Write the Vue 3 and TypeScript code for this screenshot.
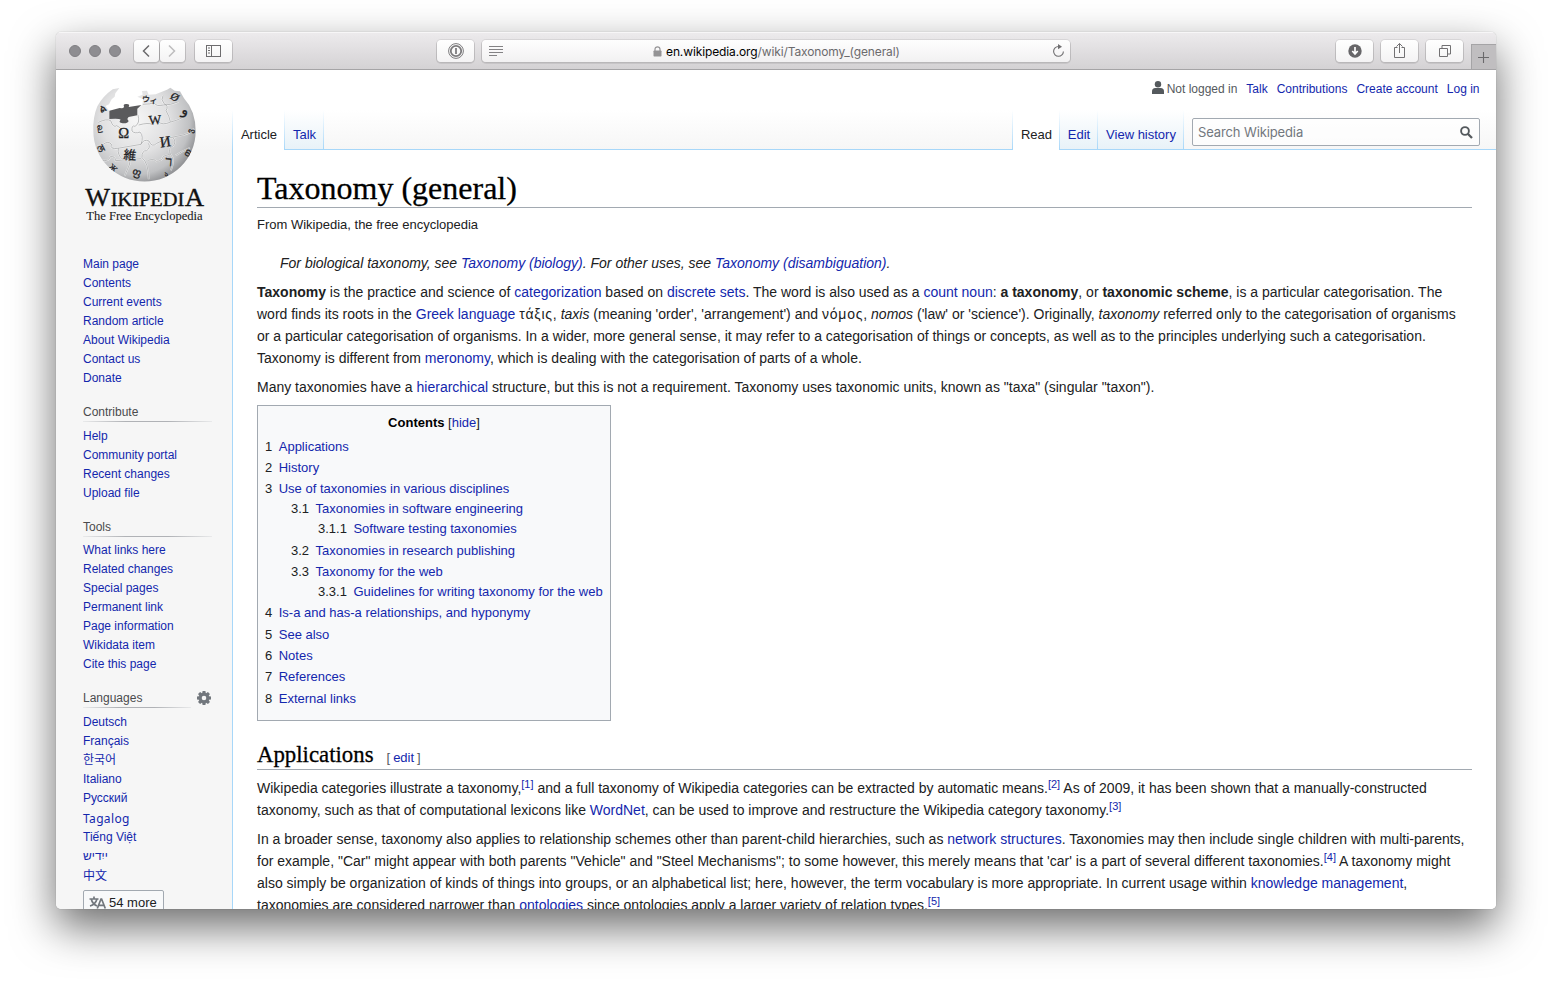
<script setup lang="ts">
interface Portal { title: string; items: string[] }
interface TocRow { num: string; label: string; level: number; after: number }

const mainLinks: string[] = ['Main page', 'Contents', 'Current events', 'Random article', 'About Wikipedia', 'Contact us', 'Donate']
const portals: Portal[] = [
  { title: 'Contribute', items: ['Help', 'Community portal', 'Recent changes', 'Upload file'] },
  { title: 'Tools', items: ['What links here', 'Related changes', 'Special pages', 'Permanent link', 'Page information', 'Wikidata item', 'Cite this page'] },
]
const languages: string[] = ['Deutsch', 'Français', '한국어', 'Italiano', 'Русский', 'Tagalog', 'Tiếng Việt', 'ייִדיש', '中文']
const personal: string[] = ['Talk', 'Contributions', 'Create account', 'Log in']
const seams: string = 'M85 142Q110 130 122 137 130 160 140 152 162 162 155 180M204 120Q211 145 195 154 184 149 186 168 194 177 210 171 222 184 213 208M206 150Q236 142 246 148 248 136 265 139 276 153 302 141 317 138 340 127M218 88Q242 88 252 83 259 96 280 90 300 91 326 80M279 62Q272 74 282 86 297 92 288 107 298 124 301 140M79 216 100 208Q113 197 124 207 119 224 143 220L213 208Q221 191 237 198 245 219 260 205L291 190 339 180Q358 177 372 161M145 220Q142 240 157 252 177 246 179 267L164 303M235 205Q243 218 230 227 215 226 216 248 236 264 236 313M309 188Q321 201 308 214 291 220 302 239 316 253 303 286M95 256Q116 260 121 245 135 242 137 257L213 251M234 256Q253 250 260 259 276 258 280 244L301 237M316 242Q338 227 360 218'
const toc: TocRow[] = [
  { num: '1', label: 'Applications', level: 1, after: 1 },
  { num: '2', label: 'History', level: 1, after: 1 },
  { num: '3', label: 'Use of taxonomies in various disciplines', level: 1, after: 0 },
  { num: '3.1', label: 'Taxonomies in software engineering', level: 2, after: 0 },
  { num: '3.1.1', label: 'Software testing taxonomies', level: 3, after: 2 },
  { num: '3.2', label: 'Taxonomies in research publishing', level: 2, after: 1 },
  { num: '3.3', label: 'Taxonomy for the web', level: 2, after: 0 },
  { num: '3.3.1', label: 'Guidelines for writing taxonomy for the web', level: 3, after: 1 },
  { num: '4', label: 'Is-a and has-a relationships, and hyponymy', level: 1, after: 2 },
  { num: '5', label: 'See also', level: 1, after: 1 },
  { num: '6', label: 'Notes', level: 1, after: 1 },
  { num: '7', label: 'References', level: 1, after: 2 },
  { num: '8', label: 'External links', level: 1, after: 0 },
]
</script>

<template>
  <div class="desktop">
    <div class="window">
      <div class="toolbar">
        <div class="lights"><i></i><i></i><i></i></div>
        <div class="nav-pair">
          <span class="btn half"><svg width="24" height="22" viewBox="0 0 24 22"><path d="M15 5.500 9.500 11l5.500 5.500" fill="none" stroke="#6b6a6c" stroke-width="1.500" /></svg></span>
          <span class="btn half"><svg width="24" height="22" viewBox="0 0 24 22"><path d="m9 5.500 5.500 5.500L9 16.500" fill="none" stroke="#bdbcbe" stroke-width="1.500" /></svg></span>
        </div>
        <span class="btn side"><svg width="37" height="22" viewBox="0 0 37 22"><g fill="none" stroke="#6d6c6e"><rect x="11.500" y="5.500" width="14" height="11" /><path d="M16.500 5.500v11M13 8h2M13 10.500h2M13 13h2" /></g></svg></span>
        <span class="btn onepass"><svg width="37" height="22" viewBox="0 0 37 22"><g fill="none" stroke="#7d7c7e"><circle cx="19" cy="11" r="7.400" /><circle cx="19" cy="11" r="5.200" stroke-width="1.800" /><path d="M19 8v6" stroke-width="1.800" /></g></svg></span>
        <div class="url">
          <svg class="reader" width="15" height="11" viewBox="0 0 15 11"><path d="M0 .5h14M0 3.500h14M0 6.500h14M0 9.500h8" stroke="#838284" /></svg>
          <svg class="lock" width="9" height="11" viewBox="0 0 9 11"><path d="M2 5V3.300a2.500 2.500 0 0 1 5 0V5" fill="none" stroke="#949395" stroke-width="1.200" /><rect x=".5" y="4.500" width="8" height="6" rx=".7" fill="#949395" /></svg>
          <span class="address">en.wikipedia.org<span class="path">/wiki/Taxonomy_(general)</span></span>
          <svg class="reload" width="13" height="14" viewBox="0 0 13 14"><path d="M6.500 2.500A4.900 4.900 0 1 0 11.400 7.500" fill="none" stroke="#6f6e70" stroke-width="1.100" /><path d="M6 0l4 2.700-4 2.600z" fill="#6f6e70" /></svg>
        </div>
        <span class="btn download"><svg width="37" height="22" viewBox="0 0 37 22"><circle cx="19" cy="11" r="6.700" fill="#676669" /><path d="M19 7v6.500M16.300 11l2.700 3 2.700-3" fill="none" stroke="#fff" stroke-width="1.700" /></svg></span>
        <span class="btn gap"><svg width="37" height="22" viewBox="0 0 37 22"><path d="M16.500 7.500h-3v10h10v-10h-3M18.500 13V3.500M15.500 6.500l3-3 3 3" fill="none" stroke="#727173" /></svg></span>
        <span class="btn gap"><svg width="37" height="22" viewBox="0 0 37 22"><path d="M13.500 8.500h8v8h-8zM16 8.500v-3h8.500v8.500h-3" fill="none" stroke="#727173" /></svg></span>
        <span class="newtab"><svg width="25" height="25" viewBox="0 0 25 25"><path d="M7 13.500h11M12.500 8v11" stroke="#6a696b" stroke-width="1.100" /></svg></span>
      </div>

      <div class="page">
        <aside class="sidebar">
          <svg class="logo" width="150" height="155" viewBox="0 0 450 465">
            <defs>
              <radialGradient id="ball" gradientUnits="userSpaceOnUse" cx="195" cy="135" r="205">
                <stop offset="0" stop-color="#f6f6f6" /><stop offset=".5" stop-color="#e0e0e1" /><stop offset=".8" stop-color="#c0c1c3" /><stop offset="1" stop-color="#828386" />
              </radialGradient>
              <clipPath id="globe-clip"><path d="M148 39 128 43Q98 64 82 94 68 128 70 169A153 150 0 0 0 377 169Q377 108 342 70L330 49 314 47 301 38 291 44 257 58 236 59 231 47 216 48 218 59 202 65 219 73 217 90 202 97 203 121 175 126 171 141 150 140 145 130 119 132 117 107 107 93 117 88 125 73 134 65 136 55z" /></clipPath>
            </defs>
            <path d="M148 39 128 43Q98 64 82 94 68 128 70 169A153 150 0 0 0 377 169Q377 108 342 70L330 49 314 47 301 38 291 44 257 58 236 59 231 47 216 48 218 59 202 65 219 73 217 90 202 97 203 121 175 126 171 141 150 140 145 130 119 132 117 107 107 93 117 88 125 73 134 65 136 55z" fill="url(#ball)" />
            <path d="M118 107 149 99Q161 101 162 95 158 86 170 87 181 87 176 96L214 90 202 101 202 121 176 126Q169 132 176 138 173 146 158 145 143 142 152 134 147 129 118 132z" fill="#5a5a5c" />
            <g clip-path="url(#globe-clip)">
              <path :d="seams" fill="none" stroke="#fff" stroke-opacity=".7" stroke-width="5" />
              <path :d="seams" fill="none" stroke="#a3a4a6" stroke-width="2.200" />
              <g class="glyphs" text-anchor="middle">
                <text x="161" y="189" font-size="44">Ω</text>
                <text x="256" y="148" font-size="40" transform="rotate(-4 256 148)">W</text>
                <text x="288" y="215" font-size="46" transform="rotate(-8 288 215)">И</text>
                <text x="179" y="254" font-size="38" class="cjk" transform="rotate(5 179 254)">維</text>
                <text x="295" y="273" font-size="42" transform="rotate(5 295 273)">ר</text>
                <text x="238" y="83" font-size="24" class="cjk" transform="rotate(8 238 83)">ウィ</text>
                <text x="312" y="76" font-size="33" transform="rotate(35 312 70)">Ø</text>
                <text x="343" y="119" font-size="42" transform="rotate(12 345 119)">و</text>
                <text x="103" y="109" font-size="32" transform="rotate(-25 103 107)">ል</text>
                <text x="91" y="170" font-size="28" transform="rotate(80 91 161)">வ</text>
                <text x="95" y="232" font-size="29" transform="rotate(62 95 222)">ਲ</text>
                <text x="199" y="302" font-size="32" transform="rotate(15 199 298)">ფ</text>
                <text x="354" y="242" font-size="28" transform="rotate(-62 354 234)">თ</text>
                <text x="362" y="175" font-size="24" transform="rotate(-80 362 168)">ვ</text>
                <text x="128" y="287" font-size="26" transform="rotate(43 128 280)">Җ</text>
                <text x="288" y="304" font-size="20" transform="rotate(-22 288 298)">ა</text>
              </g>
            </g>
            <g class="wordmark">
              <text x="46" y="392" font-size="73" textLength="74" lengthAdjust="spacingAndGlyphs">W</text>
              <text x="122" y="392" font-size="55" textLength="221" lengthAdjust="spacingAndGlyphs">IKIPEDI</text>
              <text x="344" y="392" font-size="73" textLength="58" lengthAdjust="spacingAndGlyphs">A</text>
              <text class="tagline" x="49" y="435" font-size="37" textLength="349" lengthAdjust="spacingAndGlyphs">The Free Encyclopedia</text>
            </g>
          </svg>
          <ul class="links first"><li v-for="item in mainLinks" :key="item"><a>{{ item }}</a></li></ul>
          <section v-for="portal in portals" :key="portal.title" class="portal" :class="portal.title.toLowerCase()">
            <h3>{{ portal.title }}</h3>
            <ul class="links"><li v-for="item in portal.items" :key="item"><a>{{ item }}</a></li></ul>
          </section>
          <section class="portal langs">
            <div class="lang-head">
              <h3>Languages</h3>
              <svg width="14" height="14" viewBox="0 0 20 20"><g fill="#72777d"><path d="M8 0h4l1 5H7zM8 20h4l1-5H7z" /><path d="M8 0h4l1 5H7zM8 20h4l1-5H7z" transform="rotate(45 10 10)" /><path d="M8 0h4l1 5H7zM8 20h4l1-5H7z" transform="rotate(90 10 10)" /><path d="M8 0h4l1 5H7zM8 20h4l1-5H7z" transform="rotate(135 10 10)" /></g><circle cx="10" cy="10" r="5.300" fill="none" stroke="#72777d" stroke-width="4" /></svg>
            </div>
            <ul class="links"><li v-for="item in languages" :key="item" :class="{ wide: item === 'Tagalog', han: item === '中文' }"><a>{{ item }}</a></li></ul>
            <div class="more">
              <svg width="17" height="14" viewBox="0 0 17 14"><g fill="none" stroke="#72777d" stroke-width="1.700"><path d="M.5 3h9M5 .5V3M2.300 3C3 6.500 5 8.500 8 10M8 3C7 6.500 4.500 9 1 10M8.300 12.500l3.700-9.500h.6l3.700 9.500M10 9.300h5" /></g></svg>
              <span>54 more</span>
            </div>
          </section>
        </aside>

        <div class="main">
          <header class="head">
            <div class="personal">
              <svg width="12" height="13" viewBox="0 0 12 13"><circle cx="6" cy="3.300" r="3.200" fill="#54595d" /><path d="M0 13v-2.500Q0 7 3.300 7h5.400Q12 7 12 10.500V13z" fill="#54595d" /></svg>
              <span class="anon">Not logged in</span>
              <a v-for="item in personal" :key="item">{{ item }}</a>
            </div>
            <nav class="tabs">
              <span class="tab article on">Article</span>
              <a class="tab talk">Talk</a>
              <span class="fill"></span>
              <span class="tab read on">Read</span>
              <a class="tab edit">Edit</a>
              <a class="tab history">View history</a>
              <div class="search">
                <span>Search Wikipedia</span>
                <svg width="13" height="13" viewBox="0 0 13 13"><circle cx="5" cy="5" r="3.900" fill="none" stroke="#54595d" stroke-width="1.900" /><path d="m7.800 7.800 4.200 4.200" stroke="#54595d" stroke-width="2.300" /></svg>
              </div>
            </nav>
          </header>

          <article class="content">
            <h1><span>Taxonomy (general)</span></h1>
            <div class="sub">From Wikipedia, the free encyclopedia</div>
            <div class="hatnote">For biological taxonomy, see <a>Taxonomy (biology)</a>. For other uses, see <a>Taxonomy (disambiguation)</a>.</div>
            <p>
              <b>Taxonomy</b> is the practice and science of <a>categorization</a> based on <a>discrete sets</a>. The word is also used as a <a>count noun</a>: <b>a taxonomy</b>, or <b>taxonomic scheme</b>, is a particular categorisation. The<br>
              word finds its roots in the <a>Greek language</a> <span class="greek">τάξις</span>, <i>taxis</i> (meaning 'order', 'arrangement') and <span class="greek">νόμος</span>, <i>nomos</i> ('law' or 'science'). Originally, <i>taxonomy</i> referred only to the categorisation of organisms<br>
              or a particular categorisation of organisms. In a wider, more general sense, it may refer to a categorisation of things or concepts, as well as to the principles underlying such a categorisation.<br>
              Taxonomy is different from <a>meronomy</a>, which is dealing with the categorisation of parts of a whole.
            </p>
            <p>Many taxonomies have a <a>hierarchical</a> structure, but this is not a requirement. Taxonomy uses taxonomic units, known as "taxa" (singular "taxon").</p>
            <div class="toc">
              <div class="toc-title"><b>Contents</b> [<a>hide</a>]</div>
              <div v-for="row in toc" :key="row.num" class="toc-row" :class="['level' + row.level, 'after' + row.after]"><span>{{ row.num }}</span><a>{{ row.label }}</a></div>
            </div>
            <h2><span>Applications</span><small>[ <a>edit</a> ]</small></h2>
            <p>
              Wikipedia categories illustrate a taxonomy,<sup>[1]</sup> and a full taxonomy of Wikipedia categories can be extracted by automatic means.<sup>[2]</sup> As of 2009, it has been shown that a manually-constructed<br>
              taxonomy, such as that of computational lexicons like <a>WordNet</a>, can be used to improve and restructure the Wikipedia category taxonomy.<sup>[3]</sup>
            </p>
            <p>
              In a broader sense, taxonomy also applies to relationship schemes other than parent-child hierarchies, such as <a>network structures</a>. Taxonomies may then include single children with multi-parents,<br>
              for example, "Car" might appear with both parents "Vehicle" and "Steel Mechanisms"; to some however, this merely means that 'car' is a part of several different taxonomies.<sup>[4]</sup> A taxonomy might<br>
              also simply be organization of kinds of things into groups, or an alphabetical list; here, however, the term vocabulary is more appropriate. In current usage within <a>knowledge management</a>,<br>
              taxonomies are considered narrower than <a>ontologies</a> since ontologies apply a larger variety of relation types.<sup>[5]</sup>
            </p>
          </article>
        </div>
      </div>
    </div>
  </div>
</template>

<style>
body { margin: 0; background: #fff; overflow: hidden; }
</style>

<style scoped>
.desktop { box-sizing: border-box; width: 1552px; height: 989px; padding: 32px 56px 80px; background: #fff; font-family: "Liberation Sans", "Noto Sans", "Noto Sans CJK KR", sans-serif; color: #202122; overflow: hidden; }
.window { display: flex; flex-direction: column; height: 877px; border-radius: 5px; overflow: hidden; box-shadow: 0 0 1px rgba(0,0,0,.4), 0 18px 44px rgba(0,0,0,.58); background: #fff; }
.toolbar { box-sizing: border-box; display: flex; flex: none; height: 38px; padding: 8px 0 0 13px; background: linear-gradient(#edebed, #d4d2d4); border-bottom: 1px solid #a5a4a6; box-shadow: inset 0 1px #f7f6f7; }
.lights { display: flex; gap: 8px; margin-top: 5px; }
.lights i { box-sizing: border-box; width: 12px; height: 12px; border-radius: 50%; background: #8e8d91; border: 1px solid #807f83; }
.btn { box-sizing: border-box; display: flex; width: 37px; height: 22px; border-radius: 4px; background: linear-gradient(#fff, #f4f3f4); box-shadow: 0 0 0 1px rgba(0,0,0,.07), 0 1px 0 1px rgba(0,0,0,.08); }
.nav-pair { display: flex; gap: 1px; margin-left: 13px; }
.half { width: 25px; }
.side { margin-left: 10px; }
.onepass { margin-left: 205px; }
.url { display: flex; width: 588px; height: 22px; margin-left: 8px; border-radius: 4px; background: linear-gradient(#fefefe, #f2f1f2); box-shadow: 0 0 0 1px rgba(0,0,0,.07), 0 1px 0 1px rgba(0,0,0,.08); align-items: center; }
.reader { margin-left: 7px; }
.lock { margin-left: 149px; }
.address { width: 386px; margin-left: 4px; padding-top: 1px; font: 12px/22px Inter, sans-serif; letter-spacing: -.12px; color: #000; white-space: nowrap; }
.path { color: #6b6a6c; }
.download { margin-left: 266px; }
.gap { margin-left: 8px; }
.newtab { box-sizing: border-box; width: 25px; height: 25px; margin: 4px 0 0 8px; background: #c0bec0; box-shadow: inset 1px 1px #a5a4a6; }
.page { display: flex; flex: 1; min-height: 0; background: linear-gradient(#fff, #fff 40px, #f6f6f6 80px, #f6f6f6); }
a, sup { color: #1327ad; }
.sidebar { width: 176px; flex: none; box-sizing: border-box; font-size: 12px; }
.logo { display: block; margin: 5px 0 0 14px; }
.glyphs { font-family: "Liberation Serif", "DejaVu Sans", "Noto Sans", serif; fill: #202022; stroke: #202022; stroke-width: .8; }
.glyphs .cjk { font-family: "Noto Sans CJK JP", sans-serif; }
.wordmark { font-family: "Liberation Serif", serif; fill: #111; stroke: #111; stroke-width: 1; }
.tagline { stroke-width: .3; fill: #222; }
.links { list-style: none; margin: 0; padding: 0 0 0 27px; line-height: 19px; }
.links li { height: 19px; white-space: nowrap; }
.links.first { margin-top: 25px; }
.portal { margin-top: 15px; }
h3 { margin: 0 0 5px 27px; width: 129px; height: 19px; box-sizing: border-box; font-size: 12px; line-height: 18px; font-weight: 400; color: #4a4b4d; background: linear-gradient(to right, rgba(180,184,189,.2), #b0b2b6 33%, #b0b2b6 66%, rgba(180,184,189,.2)) left bottom / 100% 1px no-repeat; }
.tools h3 { margin-bottom: 4px; }
.lang-head { display: flex; }
.lang-head h3 { width: 108px; }
.lang-head svg { margin: 2px 0 0 6px; }
.links .wide { height: 20px; padding-top: 0; line-height: 21px; font-family: "Noto Sans", sans-serif; letter-spacing: .35px; }
.links .han { line-height: 21px; }
.more { box-sizing: border-box; display: flex; width: 81px; height: 28px; margin: 5px 0 0 27px; padding: 5px 0 0 5px; gap: 3px; border: 1px solid #a2a9b1; border-radius: 2px; background: #f8f9fa; font-size: 13px; line-height: 13px; white-space: nowrap; }
.main { display: flex; flex-direction: column; flex: 1; min-width: 0; }
.head { display: flex; flex-direction: column; flex: none; height: 80px; }
.personal { display: flex; justify-content: flex-end; gap: 9px; height: 40px; padding-right: 16.5px; font-size: 12px; line-height: 38px; white-space: nowrap; }
.personal svg { margin: 11px -6px 0 0; }
.anon { color: #54595d; }
.tabs { display: flex; height: 40px; background: linear-gradient(#a7d7f9, #a7d7f9) left bottom / 100% 1px no-repeat, linear-gradient(#fff, #a7d7f9) left top / 1px 100% no-repeat; padding-left: 1px; }
.tab { box-sizing: border-box; height: 39px; font-size: 13px; line-height: 49px; text-align: center; white-space: nowrap; background: linear-gradient(#fff, #a7d7f9) right top / 1px 100% no-repeat, linear-gradient(#fff, #e8f2f8); }
.tab.on { height: 40px; color: #202122; background: linear-gradient(#fff, #a7d7f9) right top / 1px 100% no-repeat, #fff; }
.article { width: 52px; }
.talk { width: 39px; }
.fill { flex: 1; background: linear-gradient(#fff, #a7d7f9) right top / 1px 100% no-repeat; }
.read { width: 47px; }
.edit { width: 38px; }
.history { width: 86px; }
.search { box-sizing: border-box; display: flex; justify-content: space-between; width: 288px; height: 28px; margin: 8px 16px 0 8px; padding: 0 6px 0 5px; align-items: center; border: 1px solid #a2a9b1; border-radius: 2px; background: rgba(255,255,255,.6); font: 13px/26px Inter, sans-serif; letter-spacing: -.12px; color: #72777d; }
.content { flex: 1; min-height: 0; padding: 0 24px; border-left: 1px solid #a7d7f9; background: #fff; font-size: 14px; line-height: 22px; }
h1, h2 { font-family: "Liberation Serif", serif; font-weight: 400; color: #000; margin: 0; border-bottom: 1px solid #a2a9b1; box-sizing: border-box; white-space: nowrap; -webkit-text-stroke: .3px #000; }
h1 { height: 58px; padding-top: 20px; font-size: 32px; line-height: 36px; }
h2 { height: 49px; padding-top: 20px; font-size: 22.8px; line-height: 28px; }
h2 small { margin-left: 13px; font: 13px/20px "Liberation Sans", sans-serif; word-spacing: -.6px; color: #54595d; -webkit-text-stroke: 0; }
.sub { height: 44px; box-sizing: border-box; padding-top: 6px; font-size: 13px; line-height: 22px; }
.hatnote { padding-left: 23px; margin-bottom: 7px; font-style: italic; white-space: nowrap; }
.greek { letter-spacing: .8px; }
p { margin: 0 0 7px; white-space: nowrap; }
h2 + p { margin-top: 7px; }
sup { font-size: 11px; line-height: 1; vertical-align: 5px; }
.toc { box-sizing: border-box; width: 354px; height: 316px; padding: 7px; border: 1px solid #a2a9b1; background: #f8f9fa; font-size: 13px; line-height: 20px; white-space: nowrap; }
.toc-title { text-align: center; margin-bottom: 4px; }
.toc-title b { color: #000; }
.toc-row { display: flex; gap: 6.5px; }
.level2 { padding-left: 26px; }
.level3 { padding-left: 53px; }
.after1 { padding-bottom: 1px; }
.after2 { padding-bottom: 2px; }
</style>
